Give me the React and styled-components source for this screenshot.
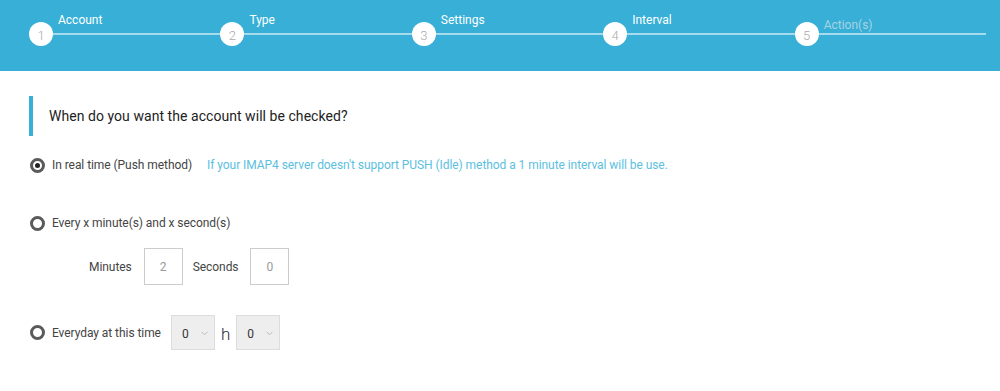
import React from "react";
import styled, { createGlobalStyle } from "styled-components";

const GlobalStyle = createGlobalStyle`
    body {
        margin: 0;
        background: #fff;
        font-family: Roboto, "Noto Sans", Arial, sans-serif;
    }
`;

const steps = [
    { n: 1, label: "Account" },
    { n: 2, label: "Type" },
    { n: 3, label: "Settings" },
    { n: 4, label: "Interval" },
    { n: 5, label: "Action(s)", disabled: true },
];

const Header = styled.div`
    height: 71px;
    box-sizing: border-box;
    background: #37afd6;
    padding: 13px 14px 0 29px;
    display: flex;
`;

const Step = styled.div`
    flex: 1;
    display: flex;
    align-items: flex-start;
`;

const Circle = styled.div`
    width: 24px;
    height: 24px;
    flex-shrink: 0;
    margin-top: 9px;
    border-radius: 50%;
    background: #fff;
    color: #aaa;
    font-size: 13px;
    font-weight: 300;
    display: flex;
    align-items: center;
    justify-content: center;
    padding-top: 2px;
    box-sizing: border-box;
`;

const StepBody = styled.div`
    flex: 1;
    display: flex;
    flex-direction: column;
`;

const StepLabel = styled.div`
    height: 20px;
    box-sizing: border-box;
    padding: ${({ $disabled }) => ($disabled ? "5px" : "0")} 0 0 5px;
    line-height: 14px;
    font-size: 12px;
    color: ${({ $disabled }) => ($disabled ? "#a8d3e4" : "#fff")};
`;

const StepLine = styled.div`
    height: 2px;
    background: #a6dbee;
`;

const Content = styled.div`
    padding: 25px 29px 0;
`;

const Heading = styled.h2`
    margin: 0;
    height: 40px;
    border-left: 4px solid #37afd6;
    padding-left: 16px;
    display: flex;
    align-items: center;
    font-size: 14px;
    font-weight: 400;
    letter-spacing: 0.05px;
    color: #222;
`;

const Option = styled.label`
    display: flex;
    align-items: center;
    gap: 7px;
    margin-top: ${({ $top }) => $top}px;
    font-size: 12px;
    letter-spacing: -0.06px;
    color: #444;
    height: ${({ $h }) => $h || 16}px;
`;

const Radio = styled.span`
    width: 15px;
    height: 15px;
    box-sizing: border-box;
    margin-left: 1px;
    border-radius: 50%;
    border: 3px solid #5a5a5a;
    display: flex;
    align-items: center;
    justify-content: center;
    &::after {
        content: "";
        width: 5px;
        height: 5px;
        border-radius: 50%;
        background: #222;
        display: ${({ $checked }) => ($checked ? "block" : "none")};
    }
`;

const Hint = styled.span`
    margin-left: 8px;
    color: #5bc0de;
`;

const Fields = styled.div`
    display: flex;
    align-items: center;
    margin-top: 17px;
    padding-left: 60px;
    font-size: 12px;
    letter-spacing: -0.06px;
    color: #444;
`;

const FieldLabel = styled.span`
    margin-right: 12px;
`;

const NumberBox = styled.input`
    width: 39px;
    height: 37px;
    box-sizing: border-box;
    border: 1px solid #ccc;
    text-align: center;
    font-family: inherit;
    font-size: 12px;
    color: #999;
    margin-right: 10px;
    outline: none;
`;

const TimeGroup = styled.div`
    display: flex;
    align-items: center;
    margin-left: 3px;
`;

const Select = styled.div`
    width: 44px;
    height: 35px;
    box-sizing: border-box;
    border: 1px solid #ddd;
    background: #eee;
    display: flex;
    align-items: center;
    justify-content: space-between;
    padding: 2px 6px 0 10px;
    font-size: 12px;
    color: #333;
`;

const Caret = styled.svg`
    width: 7px;
    height: 5px;
`;

const Unit = styled.span`
    font-size: 17px;
    font-weight: 300;
    color: #2b2b3c;
    margin: 0 6px;
    padding-top: 3px;
`;

function Dropdown({ value }) {
    return (
        <Select>
            {value}
            <Caret viewBox="0 0 7 5">
                <path d="M0.5 0.8 L3.5 3.8 L6.5 0.8" fill="none" stroke="#bbb" strokeWidth="1" />
            </Caret>
        </Select>
    );
}

export default function App() {
    return (
        <>
            <GlobalStyle />
            <Header>
                {steps.map((s) => (
                    <Step key={s.n}>
                        <Circle>{s.n}</Circle>
                        <StepBody>
                            <StepLabel $disabled={s.disabled}>{s.label}</StepLabel>
                            <StepLine />
                        </StepBody>
                    </Step>
                ))}
            </Header>
            <Content>
                <Heading>When do you want the account will be checked?</Heading>
                <Option $top={21}>
                    <Radio $checked />
                    In real time (Push method)
                    <Hint>If your IMAP4 server doesn't support PUSH (Idle) method a 1 minute interval will be use.</Hint>
                </Option>
                <Option $top={42}>
                    <Radio />
                    Every x minute(s) and x second(s)
                </Option>
                <Fields>
                    <FieldLabel>Minutes</FieldLabel>
                    <NumberBox defaultValue="2" />
                    <FieldLabel>Seconds</FieldLabel>
                    <NumberBox defaultValue="0" />
                </Fields>
                <Option $top={30} $h={35}>
                    <Radio />
                    Everyday at this time
                    <TimeGroup>
                        <Dropdown value="0" />
                        <Unit>h</Unit>
                        <Dropdown value="0" />
                    </TimeGroup>
                </Option>
            </Content>
        </>
    );
}
